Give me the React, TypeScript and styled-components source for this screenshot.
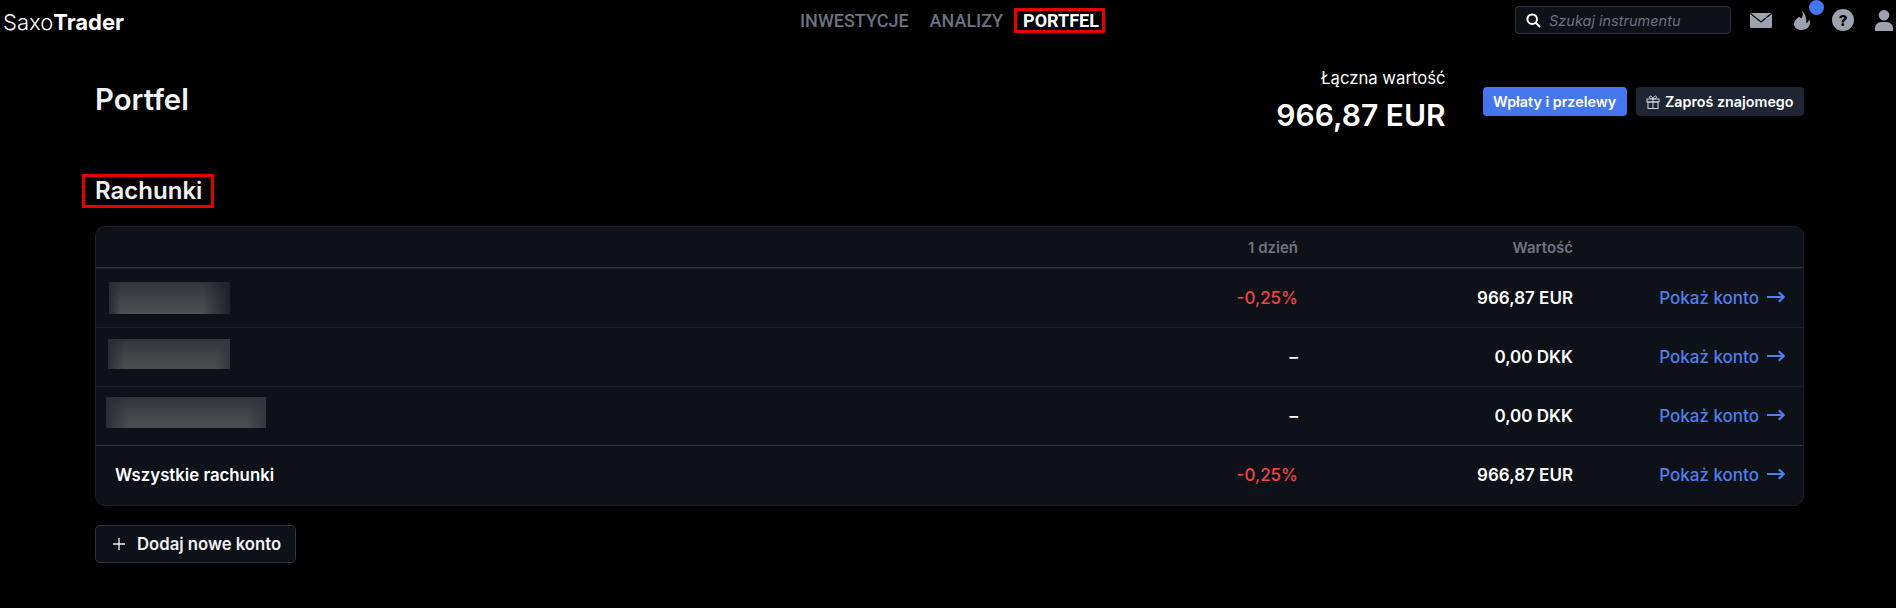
import React from "react";
import styled, { createGlobalStyle } from "styled-components";

const Global = createGlobalStyle`
  html, body { margin: 0; padding: 0; background: #000; }
  body { font-family: Inter, "Liberation Sans", sans-serif; color: #fff; width: 1896px; height: 608px; overflow: hidden; }
  * { box-sizing: border-box; }
`;

const TopBar = styled.header`
  display: grid;
  grid-template-columns: 1fr auto 1fr;
  align-items: center;
  height: 40px;
  padding: 0 3px;
`;
const Logo = styled.div`
  font-size: 22px;
  font-weight: 300;
  color: #fff;
  padding-top: 3px;
  b { font-weight: 700; }
`;
const Nav = styled.nav`
  display: flex;
  align-items: center;
  gap: 21px;
  margin-left: 9px;
`;
const NavItem = styled.a<{ $active?: boolean }>`
  font-family: Roboto, sans-serif;
  font-size: 18px;
  line-height: 19px;
  font-weight: ${(p) => (p.$active ? 700 : 500)};
  color: ${(p) => (p.$active ? "#fff" : "#6b7280")};
  ${(p) => p.$active && "border: 3px solid #e60000; padding: 0 3px 0 6px; margin-left: -10px;"}
`;
const Tools = styled.div`
  display: flex;
  align-items: center;
  justify-content: flex-end;
`;
const Search = styled.div`
  display: flex;
  align-items: center;
  gap: 8px;
  width: 216px;
  height: 28px;
  padding: 0 10px;
  background: #0f1118;
  border: 1px solid #2a2f3b;
  border-radius: 4px;
  color: #fff;
  margin-right: 19px;
`;
const SearchText = styled.span`
  font-size: 14.5px;
  font-style: italic;
  color: #6b7280;
`;
const IconBtn = styled.span<{ $mr: number }>`
  display: inline-flex;
  position: relative;
  margin-right: ${(p) => p.$mr}px;
`;
const Dot = styled.span`
  position: absolute;
  top: -11px;
  left: 14.5px;
  width: 15px;
  height: 15px;
  border-radius: 50%;
  background: #4477ee;
`;
const Page = styled.main`
  padding: 16px 92px 0 95px;
`;
const TitleRow = styled.section`
  display: flex;
  align-items: flex-start;
  height: 118px;
`;
const PageTitle = styled.h1`
  flex: 1;
  margin: 27px 0 0;
  font-size: 29.3px;
  font-weight: 600;
  color: #f2f2f2;
  line-height: 34px;
`;
const Total = styled.div`
  text-align: right;
  margin: 12px 37px 0 0;
`;
const TotalLabel = styled.div`
  font-size: 16.7px;
  line-height: 20px;
  color: #fff;
`;
const TotalValue = styled.div`
  font-size: 30px;
  font-weight: 600;
  line-height: 38px;
  margin-top: 8px;
`;
const Btn = styled.button<{ $kind: "primary" | "dark" }>`
  display: inline-flex;
  align-items: center;
  justify-content: center;
  gap: 5px;
  height: 29px;
  margin-top: 31px;
  padding: 0 10.5px;
  border: 0;
  border-radius: 4px;
  font: 600 14.3px Inter, sans-serif;
  color: #fff;
  background: ${(p) => (p.$kind === "primary" ? "#4477ee" : "#1f2533")};
  margin-left: ${(p) => (p.$kind === "primary" ? 0 : 9)}px;
`;
const SectionTitle = styled.h2`
  display: block;
  width: 132px;
  margin: 0 0 18px -13px;
  padding: 0 10px;
  height: 34px;
  font-size: 24px;
  font-weight: 600;
  line-height: 28px;
  color: #f2f2f2;
  border: 3px solid #e60000;
`;
const Card = styled.div`
  background: #0e1118;
  border: 1px solid #1a1e29;
  border-radius: 10px;
`;
const Row = styled.div<{ $kind?: "head" | "total" }>`
  display: grid;
  grid-template-columns: 1fr 120px 275px 212px;
  align-items: center;
  height: ${(p) => (p.$kind === "head" ? 41 : p.$kind === "total" ? 60 : 59)}px;
  padding: 0 18px 1px 0;
  border-top: 1px solid ${(p) => (p.$kind === "total" ? "#2f3442" : "#1a1e29")};
  font-size: 17px;
  font-weight: 600;
  &:first-child { border-top: 0; border-bottom: 1px solid #2f3442; padding-bottom: 0; }
`;
const Head = styled.div`
  font-size: 15px;
  font-weight: 600;
  color: #6f7480;
  text-align: right;
`;
const Name = styled.div`
  font-size: 16.8px;
  font-weight: 600;
  padding-left: 19px;
`;
const Change = styled.div<{ $neg?: boolean }>`
  text-align: right;
  font-weight: ${(p) => (p.$neg ? 500 : 600)};
  color: ${(p) => (p.$neg ? "#ef4444" : "#fff")};
`;
const Value = styled.div`
  text-align: right;
`;
const Link = styled.a`
  display: flex;
  align-items: center;
  justify-content: flex-end;
  gap: 8px;
  font-size: 17px;
  font-weight: 500;
  color: #4d80ee;
  svg { position: relative; top: -1px; }
`;
const Blur = styled.div<{ $w: number; $h: number; $ml: number; $up: number; $fade?: boolean }>`
  width: ${(p) => p.$w}px;
  height: ${(p) => p.$h}px;
  margin-left: ${(p) => p.$ml}px;
  margin-bottom: ${(p) => p.$up}px;
  background: ${(p) =>
    p.$fade
      ? "linear-gradient(90deg, #282b34 0%, rgba(40,43,52,0) 10%, rgba(32,35,44,0) 78%, #1e212a 100%), "
      : "linear-gradient(90deg, #2a2d35 0%, rgba(40,43,52,0) 14%, rgba(40,43,52,0) 88%, #33363d 100%), "}
    linear-gradient(180deg, #303338 0%, #45474b 60%, #4b4d51 100%);
`;
const AddBtn = styled.button`
  display: inline-flex;
  align-items: center;
  gap: 11px;
  height: 38px;
  margin-top: 19px;
  padding: 0 14px 0 16px;
  background: #0e1118;
  border: 1px solid #2f3442;
  border-radius: 5px;
  color: #f2f2f2;
  font: 600 16.7px Inter, sans-serif;
`;

const Arrow = () => (
  <svg width="18" height="12" viewBox="0 0 18 12" fill="none" stroke="#4d80ee" strokeWidth="2.2">
    <path d="M0 6h16.5M11.8 1.2 16.6 6l-4.8 4.8" />
  </svg>
);

const rows = [
  { blur: [121, 32, 13], up: 0, fade: true, change: "-0,25%", neg: true, value: "966,87 EUR" },
  { blur: [122, 30, 12], up: 6, fade: false, change: "–", neg: false, value: "0,00 DKK" },
  { blur: [160, 31, 10], up: 6, fade: false, change: "–", neg: false, value: "0,00 DKK" },
];

export default function App() {
  return (
    <>
      <Global />
      <TopBar>
        <Logo>Saxo<b>Trader</b></Logo>
        <Nav>
          <NavItem>INWESTYCJE</NavItem>
          <NavItem>ANALIZY</NavItem>
          <NavItem $active>PORTFEL</NavItem>
        </Nav>
        <Tools>
          <Search>
            <svg width="15" height="15" viewBox="0 0 15 15" fill="none" stroke="#fff" strokeWidth="2">
              <circle cx="6.2" cy="6.2" r="4.8" />
              <path d="M9.8 9.8 14 14" />
            </svg>
            <SearchText>Szukaj instrumentu</SearchText>
          </Search>
          <IconBtn $mr={22}>
            <svg width="22" height="15" viewBox="0 0 22 15">
              <rect width="22" height="15" rx="1.5" fill="#9ca3af" />
              <path d="M0.5 0.5 11 9 21.5 0.5" fill="none" stroke="#000" strokeWidth="1.2" />
            </svg>
          </IconBtn>
          <IconBtn $mr={22}>
            <svg width="16" height="19" viewBox="0 0 16 19">
              <path fill="#9ca3af" d="M8 0c1.4 3 .8 5.4-.6 7.6C6.8 7 6.2 6.3 5.2 5.7 2.4 7.4 0 10 0 13.2 0 16.6 3.4 19 7.6 19c4.6 0 8.4-2.8 8.4-7.4 0-1.2-.3-2.2-.8-3-.5 1.8-1.4 3-2.8 3.8C12.6 7.8 11.6 3 8 0z" />
            </svg>
            <Dot />
          </IconBtn>
          <IconBtn $mr={21}>
            <svg width="22" height="22" viewBox="0 0 22 22">
              <circle cx="11" cy="11" r="11" fill="#9ca3af" />
              <text x="11" y="16.5" textAnchor="middle" fontFamily="Inter, sans-serif" fontSize="15" fontWeight="800" fill="#000">?</text>
            </svg>
          </IconBtn>
          <IconBtn $mr={0}>
            <svg width="18" height="21" viewBox="0 0 18 21">
              <circle cx="9" cy="5.3" r="5.3" fill="#9ca3af" />
              <path fill="#9ca3af" d="M0 21v-3c0-3 3-6 6-6h6c3 0 6 3 6 6v3z" />
            </svg>
          </IconBtn>
        </Tools>
      </TopBar>
      <Page>
        <TitleRow>
          <PageTitle>Portfel</PageTitle>
          <Total>
            <TotalLabel>Łączna wartość</TotalLabel>
            <TotalValue>966,87 EUR</TotalValue>
          </Total>
          <Btn $kind="primary">Wpłaty i przelewy</Btn>
          <Btn $kind="dark">
            <svg width="14" height="14" viewBox="0 0 14 14" fill="none" stroke="#d1d5db" strokeWidth="1">
              <rect x="1" y="4" width="12" height="3" />
              <rect x="2" y="7" width="10" height="6.5" />
              <path d="M7 4v9.5M7 4C5 4 3.5 3.4 3.5 2S6 .5 7 4zM7 4c2 0 3.5-.6 3.5-2S8 .5 7 4z" />
            </svg>
            Zaproś znajomego
          </Btn>
        </TitleRow>
        <SectionTitle>Rachunki</SectionTitle>
        <Card>
          <Row $kind="head">
            <div />
            <Head>1 dzień</Head>
            <Head>Wartość</Head>
            <div />
          </Row>
          {rows.map((r, i) => (
            <Row key={i}>
              <Blur $w={r.blur[0]} $h={r.blur[1]} $ml={r.blur[2]} $up={r.up} $fade={r.fade} />
              <Change $neg={r.neg}>{r.change}</Change>
              <Value>{r.value}</Value>
              <Link>Pokaż konto <Arrow /></Link>
            </Row>
          ))}
          <Row $kind="total">
            <Name>Wszystkie rachunki</Name>
            <Change $neg>-0,25%</Change>
            <Value>966,87 EUR</Value>
            <Link>Pokaż konto <Arrow /></Link>
          </Row>
        </Card>
        <AddBtn>
          <svg width="14" height="14" viewBox="0 0 14 14" stroke="#f2f2f2" strokeWidth="1.3">
            <path d="M7 1v12M1 7h12" />
          </svg>
          Dodaj nowe konto
        </AddBtn>
      </Page>
    </>
  );
}
